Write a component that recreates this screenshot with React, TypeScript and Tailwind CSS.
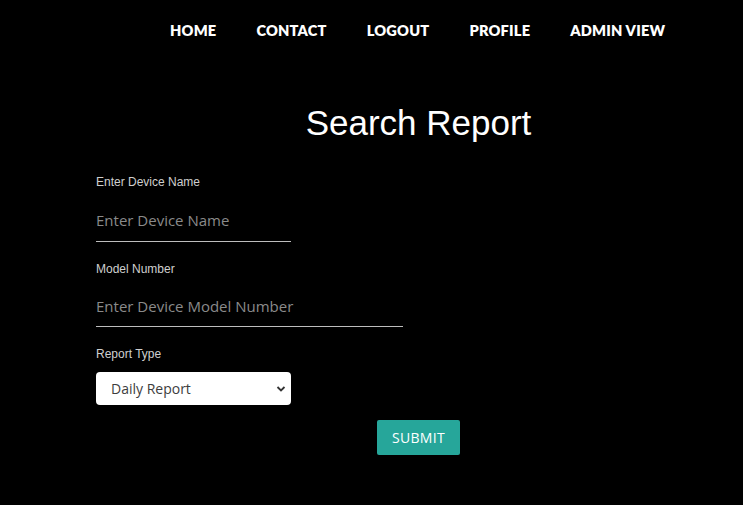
export default function App() {
  const navItems = ['HOME', 'CONTACT', 'LOGOUT', 'PROFILE', 'ADMIN VIEW']

  return (
    <div className="min-h-screen w-full bg-black text-white">
      {/* Top navigation */}
      <nav className="h-[60px] pt-[2px] flex items-center pl-[170px] gap-x-[40px] font-['Lato',sans-serif] font-extrabold text-[14.6px] tracking-[0.2px]">
        {navItems.map((item) => (
          <a key={item} href="#" className="text-white leading-none">
            {item}
          </a>
        ))}
      </nav>

      <div className="pl-[96px] pr-[2px]">
        {/* Title */}
        <h1 className="h-[90px] pt-[42px] text-center font-['Liberation_Sans',Arial,sans-serif] text-[35px] leading-[42px] text-white">
          Search Report
        </h1>

        {/* Form */}
        <form className="font-['Liberation_Sans',Arial,sans-serif]">
          <label className="block pt-[25px] text-[12px] leading-[14px] text-[#cfcfcf]">
            Enter Device Name
          </label>
          <input
            type="text"
            placeholder="Enter Device Name"
            className="block w-[195px] h-[53px] pt-[10px] bg-transparent border-b border-[#bdbdbd] outline-none font-['Open_Sans',sans-serif] text-[15px] text-white placeholder:text-[#8a8a8a]"
          />

          <label className="block pt-[20px] text-[12px] leading-[14px] text-[#cfcfcf]">
            Model Number
          </label>
          <input
            type="text"
            placeholder="Enter Device Model Number"
            className="block w-[307px] h-[51px] pt-[10px] bg-transparent border-b border-[#bdbdbd] outline-none font-['Open_Sans',sans-serif] text-[15px] text-white placeholder:text-[#8a8a8a]"
          />

          <label className="block pt-[20px] text-[12px] leading-[14px] text-[#cfcfcf]">
            Report Type
          </label>
          <div className="relative mt-[11px] w-[195px] h-[33px]">
            <select className="appearance-none w-full h-full rounded-[4px] bg-white pl-[15px] font-['Open_Sans',sans-serif] text-[14px] text-[#3d3d3d] outline-none">
              <option>Daily Report</option>
              <option>Weekly Report</option>
              <option>Monthly Report</option>
            </select>
            <svg
              className="pointer-events-none absolute right-[5px] top-[13px]"
              width="10"
              height="8"
              viewBox="0 0 10 8"
              fill="none"
            >
              <path d="M1.5 2L5 5.5L8.5 2" stroke="#333" strokeWidth="1.8" />
            </svg>
          </div>

          <div className="flex justify-center pt-[15px]">
            <button
              type="button"
              className="w-[83px] h-[35px] rounded-[2px] bg-[#26a69a] font-['Open_Sans',sans-serif] text-[14px] tracking-[0.3px] text-white"
            >
              SUBMIT
            </button>
          </div>
        </form>
      </div>
    </div>
  )
}
